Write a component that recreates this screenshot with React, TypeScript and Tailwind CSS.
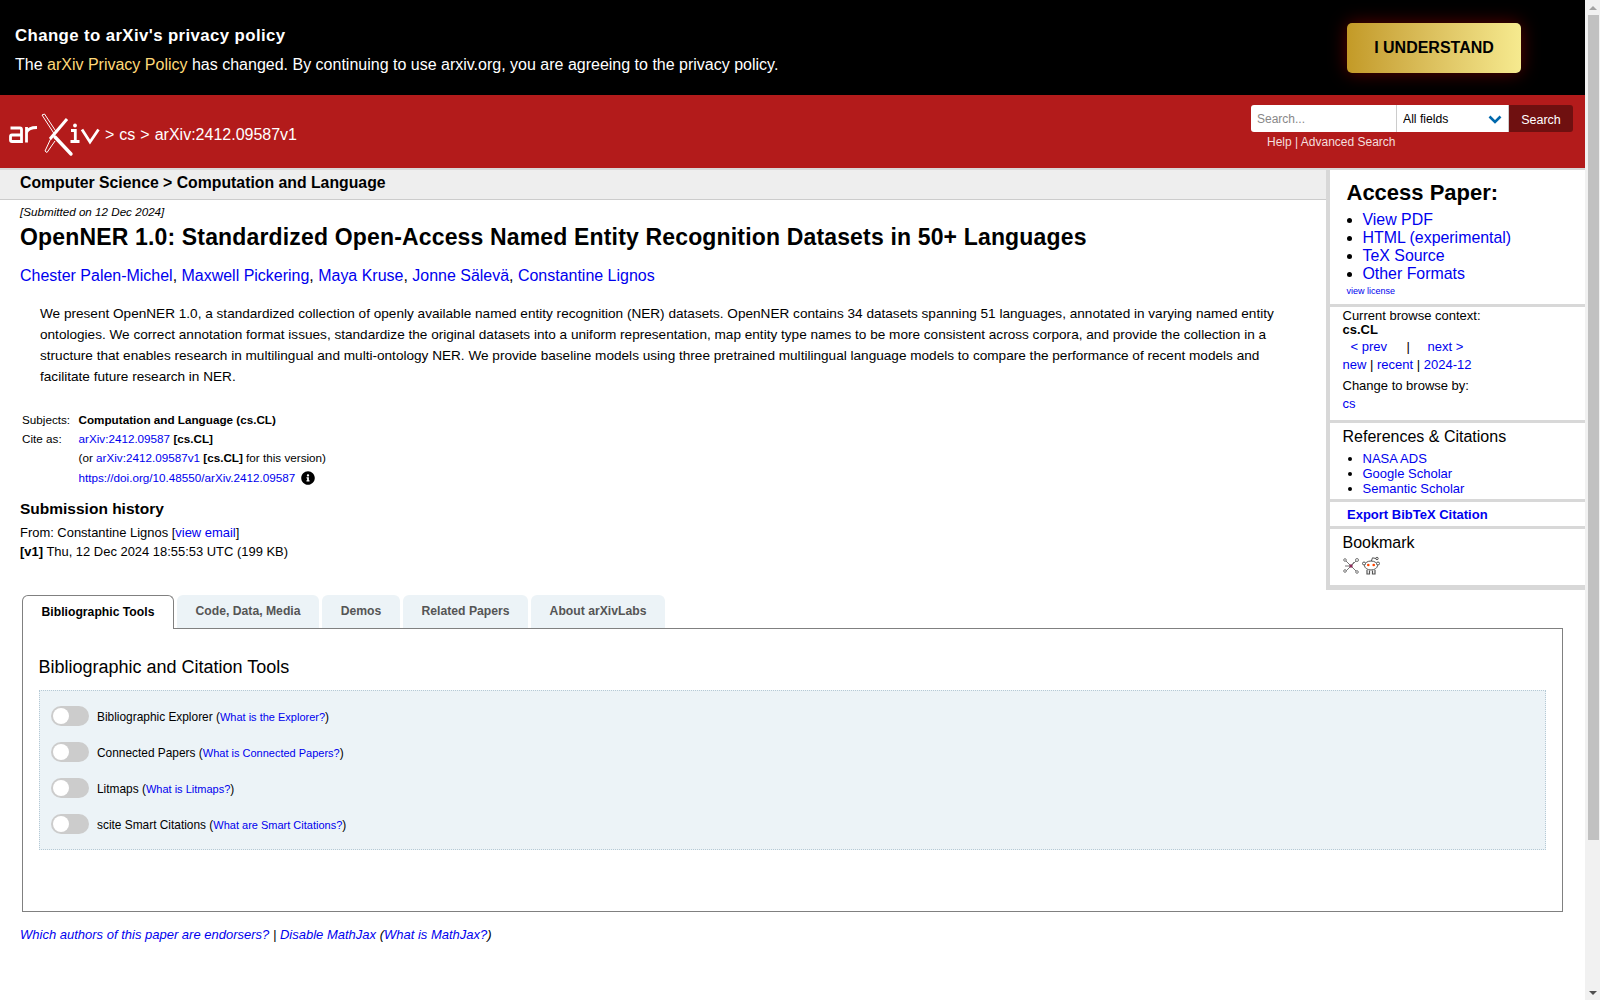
import React from "react";
import { FaInfoCircle } from "react-icons/fa";

const A = ({ children, className = "" }: { children: React.ReactNode; className?: string }) => (
  <a href="#" className={"text-[#0000ee] " + className}>{children}</a>
);

function Logo() {
  return (
    <svg width="110" height="50" viewBox="0 0 110 50" className="shrink-0" fill="none" stroke="#fff" strokeWidth="2.800">
      {/* a */}
      <path d="M10.500 18h9.500a1.500 1.500 0 0 1 1.500 1.500V31.500H12a1.500 1.500 0 0 1-1.500-1.500v-3.500A1.500 1.500 0 0 1 12 25h9.500" />
      {/* r */}
      <path d="M26.500 32.500V17M26.500 22.500c1-3 4-5 10.500-5" />
      {/* X */}
      <path d="M42 5 L55 25" strokeWidth="1" />
      <path d="M44.500 4 L57 23" strokeWidth="1" />
      <path d="M42 5 L44.500 4" strokeWidth="1" />
      <path d="M55 27 L71 44" strokeWidth="3.400" strokeLinecap="round" />
      <path d="M50 29 L67 9" strokeWidth="3" />
      <path d="M52 26 L45 41 L47 42.500 L55 31" strokeWidth="1" />
      {/* i */}
      <circle cx="75" cy="15.500" r="1.900" fill="#fff" stroke="none" />
      <path d="M71 20.500h4.300v11M70.500 31.500h9" />
      {/* v */}
      <path d="M82 19.500 L90 32 L98.500 19.500" strokeWidth="2.800" />
    </svg>
  );
}

function ScienceWise() {
  return (
    <svg width="18" height="18" viewBox="0 0 18 18" fill="none" stroke="#777" strokeWidth="1">
      <path d="M3 3L15 15M15 3L3 15M9 9L3 9M9 9L12 5" />
      <circle cx="3" cy="3" r="1.300" fill="#fff" />
      <circle cx="15" cy="3" r="1.500" fill="#fff" />
      <circle cx="3" cy="14" r="1.300" fill="#fff" />
      <circle cx="15" cy="15" r="1.300" fill="#fff" />
      <circle cx="9" cy="9" r="1.700" fill="#8c2f5b" stroke="none" />
    </svg>
  );
}

function Reddit() {
  return (
    <svg width="18" height="20" viewBox="0 0 18 20" fill="none" stroke="#555" strokeWidth="1">
      <path d="M9 6L10.500 1.800L14 2.500" />
      <circle cx="15" cy="2.500" r="1.200" />
      <ellipse cx="9" cy="9.500" rx="6.500" ry="4.500" fill="#fff" />
      <circle cx="2" cy="7.500" r="1.500" fill="#fff" />
      <circle cx="16" cy="7.500" r="1.500" fill="#fff" />
      <circle cx="6.300" cy="9" r="1.300" fill="#ff4500" stroke="none" />
      <circle cx="11.700" cy="9" r="1.300" fill="#ff4500" stroke="none" />
      <path d="M5 14v4h2.500v-3.500M13 14v4h-2.500v-3.500" strokeWidth="1.200" />
    </svg>
  );
}

function Toggle({ label, link, tail = ")" }: { label: string; link: string; tail?: string }) {
  return (
    <div className="flex items-center h-[36px]">
      <div className="w-[38px] h-[20px] rounded-full bg-[#cccccc] flex items-center pl-[2px] shrink-0">
        <div className="w-[16px] h-[16px] rounded-full bg-white" />
      </div>
      <div className="ml-[8px] pt-[2px] text-[11.900px] leading-[18px] text-black">
        {label} (<A className="text-[11px]">{link}</A>{tail}
      </div>
    </div>
  );
}

function Tab({ children, active = false, w }: { children: React.ReactNode; active?: boolean; w: string }) {
  return active ? (
    <div className={w + " h-[34px] -mb-[1px] relative z-10 bg-white border border-b-0 border-[#808080] rounded-t-[6px] flex items-center justify-center font-bold text-[12.200px] text-black pb-[1px]"}>
      {children}
    </div>
  ) : (
    <div className={w + " h-[33px] bg-[#ecf3f7] rounded-t-[6px] flex items-center justify-center font-bold text-[12.200px] text-[#555555] pb-[1px]"}>
      {children}
    </div>
  );
}

export default function App() {
  return (
    <div className="flex h-screen overflow-hidden bg-white text-black font-['Liberation_Sans',Arial,sans-serif]">
      <div className="w-[1585px] shrink-0 flex flex-col">
        {/* Privacy banner */}
        <div className="h-[95px] bg-black text-white flex items-center justify-between pl-[15px] pr-[64px] shrink-0">
          <div className="pt-[5px]">
            <div className="font-bold text-[16.800px] tracking-[0.4px] leading-[22px] mb-[7px]">Change to arXiv's privacy policy</div>
            <div className="text-[16px] leading-[22px]">
              The <a href="#" className="text-[#ffd978]">arXiv Privacy Policy</a> has changed. By continuing to use arxiv.org, you are agreeing to the privacy policy.
            </div>
          </div>
          <button className="w-[174px] h-[50px] mt-[1px] rounded-[5px] bg-gradient-to-r from-[#c39a26] to-[#f6ea8f] text-black font-bold text-[16px] shadow-[0_0_18px_rgba(170,0,0,0.55)]">
            I UNDERSTAND
          </button>
        </div>

        {/* Header */}
        <div className="h-[73px] bg-[#b31b1b] flex justify-between shrink-0">
          <div className="flex items-center pt-[7px] text-white text-[16px]">
            <Logo />
            <span className="-ml-[5px] mr-[5px]">&gt;</span>
            <span className="mr-[5px]">cs</span>
            <span className="mr-[5px]">&gt;</span>
            <span>arXiv:2412.09587v1</span>
          </div>
          <div className="pt-[10px] pr-[12px] w-[334px]">
            <div className="flex h-[27px]">
              <input placeholder="Search..." className="w-[145px] h-full bg-white rounded-l-[3px] pl-[6px] text-[12px] placeholder:text-[#888888] outline-none" />
              <div className="relative w-[113px] h-full">
                <select className="appearance-none w-full h-full bg-white border-x border-[#cccccc] pl-[6px] pt-[1px] text-[12.200px] text-black outline-none">
                  <option>All fields</option>
                </select>
                <svg width="14" height="9" viewBox="0 0 14 9" className="absolute right-[7px] top-[10px]" fill="none" stroke="#0068ac" strokeWidth="2.600">
                  <path d="M1.500 1.500L7 7L12.500 1.500" />
                </svg>
              </div>
              <button className="w-[64px] h-full bg-[#6f1010] text-white text-[12.500px] rounded-r-[3px] pt-[3px]">Search</button>
            </div>
            <div className="pl-[16px] mt-[2px] text-[12px] leading-[16px] text-[#f3dede]">Help | Advanced Search</div>
          </div>
        </div>

        {/* Paper + sidebar */}
        <div className="flex h-[422px] shrink-0">
          <div className="w-[1326px] shrink-0 border-t-2 border-[#d8d8d8]">
            <div className="h-[30px] bg-[#eeeeee] border-b border-[#cccccc] pl-[20px] font-bold text-[15.800px] leading-[26px]">
              Computer Science &gt; Computation and Language
            </div>
            <div className="pl-[20px]">
              <div className="italic text-[11.650px] leading-[14px] pt-[5px]">[Submitted on 12 Dec 2024]</div>
              <h1 className="font-bold text-[23px] leading-[30px] mt-[3px] tracking-[0.16px]">
                OpenNER 1.0: Standardized Open-Access Named Entity Recognition Datasets in 50+ Languages
              </h1>
              <div className="text-[15.980px] leading-[20px] mt-[14px]">
                <A>Chester Palen-Michel</A>, <A>Maxwell Pickering</A>, <A>Maya Kruse</A>, <A>Jonne Sälevä</A>, <A>Constantine Lignos</A>
              </div>
              <p className="w-[1240px] ml-[20px] mt-[17px] text-[13.600px] leading-[21px]">
                We present OpenNER 1.0, a standardized collection of openly available named entity recognition (NER) datasets. OpenNER contains 34 datasets spanning 51 languages, annotated in varying named entity ontologies. We correct annotation format issues, standardize the original datasets into a uniform representation, map entity type names to be more consistent across corpora, and provide the collection in a structure that enables research in multilingual and multi-ontology NER. We provide baseline models using three pretrained multilingual language models to compare the performance of recent models and facilitate future research in NER.
              </p>
              <div className="mt-[23px] ml-[2px] grid grid-cols-[56.500px_1fr] text-[11.700px] leading-[19.200px]">
                <div>Subjects:</div>
                <div className="font-bold">Computation and Language (cs.CL)</div>
                <div>Cite as:</div>
                <div><A>arXiv:2412.09587</A> <b>[cs.CL]</b></div>
                <div />
                <div>(or <A>arXiv:2412.09587v1</A> <b>[cs.CL]</b> for this version)</div>
                <div />
                <div className="flex items-center"><A>https://doi.org/10.48550/arXiv.2412.09587</A><FaInfoCircle className="ml-[6px] mt-[1px] text-[14px] text-black" /></div>
              </div>
              <div className="font-bold text-[15.500px] leading-[20px] mt-[12px]">Submission history</div>
              <div className="text-[12.950px] leading-[19px] mt-[4px]">
                From: Constantine Lignos [<A>view email</A>]
                <br />
                <b>[v1]</b> Thu, 12 Dec 2024 18:55:53 UTC (199 KB)
              </div>
            </div>
          </div>

          {/* Sidebar */}
          <aside className="flex-1 bg-[#d8d8d8] pl-[4px] pt-[2px] pb-[5px] flex flex-col">
            <div className="h-[134px] bg-white pl-[16.500px] pt-[10px]">
              <div className="font-bold text-[22px] leading-[26px]">Access Paper:</div>
              <ul className="list-disc pl-[16px] mt-[5px] text-[15.900px] leading-[18px]">
                <li><A>View PDF</A></li>
                <li><A>HTML (experimental)</A></li>
                <li><A>TeX Source</A></li>
                <li><A>Other Formats</A></li>
              </ul>
              <div className="text-[9px] leading-[12px] mt-[2px]"><A>view license</A></div>
            </div>
            <div className="h-[113px] bg-white mt-[3px] pl-[12.500px] pt-[1px] text-[13px] leading-[17.500px]">
              <div className="mt-[-1px]">Current browse context:</div>
              <div className="font-bold -mt-[4px]">cs.CL</div>
              <div className="flex ml-[8px]">
                <A className="w-[56px]">&lt; prev</A>
                <span className="w-[21px]">|</span>
                <A>next &gt;</A>
              </div>
              <div><A>new</A> | <A>recent</A> | <A>2024-12</A></div>
              <div className="mt-[4px]">Change to browse by:</div>
              <div><A>cs</A></div>
            </div>
            <div className="h-[76px] bg-white mt-[3px] pl-[12.500px] pt-[4px]">
              <div className="text-[16px] leading-[20px]">References &amp; Citations</div>
              <ul className="list-disc pl-[20px] mt-[4px] text-[13px] leading-[15px]">
                <li><A>NASA ADS</A></li>
                <li><A>Google Scholar</A></li>
                <li><A>Semantic Scholar</A></li>
              </ul>
            </div>
            <div className="h-[24px] bg-white mt-[3px] pl-[17px] text-[13px] font-bold leading-[25px]">
              <A>Export BibTeX Citation</A>
            </div>
            <div className="flex-1 bg-white mt-[3px] pl-[12.500px] pt-[4px]">
              <div className="text-[16px] leading-[20px]">Bookmark</div>
              <div className="flex items-center gap-[2px] mt-[3px] -ml-[1px]">
                <ScienceWise />
                <Reddit />
              </div>
            </div>
          </aside>
        </div>

        {/* Tabs */}
        <div className="flex gap-[3px] ml-[22px] mt-[5px] items-end">
          <Tab active w="w-[152px]">Bibliographic Tools</Tab>
          <Tab w="w-[142px]">Code, Data, Media</Tab>
          <Tab w="w-[78px]">Demos</Tab>
          <Tab w="w-[125px]">Related Papers</Tab>
          <Tab w="w-[134px]">About arXivLabs</Tab>
        </div>
        <div className="ml-[22px] w-[1541px] h-[284px] border border-[#808080] px-[16px] pt-[26px] shrink-0">
          <h2 className="text-[18px] leading-[24px] -ml-[0.500px]">Bibliographic and Citation Tools</h2>
          <div className="mt-[11px] h-[160px] bg-[#ecf3f7] border border-dotted border-[#b5c9d5] pl-[11px] pt-[7px]">
            <Toggle label="Bibliographic Explorer" link="What is the Explorer?" />
            <Toggle label="Connected Papers" link="What is Connected Papers?" />
            <Toggle label="Litmaps" link="What is Litmaps?" />
            <Toggle label="scite Smart Citations" link="What are Smart Citations?" />
          </div>
        </div>
        <div className="pl-[20px] mt-[14px] text-[13px] leading-[18px] italic">
          <A>Which authors of this paper are endorsers?</A> | <A>Disable MathJax</A> (<A>What is MathJax?</A>)
        </div>
      </div>

      {/* Page scrollbar */}
      <div className="w-[15px] shrink-0 h-full bg-[#f1f1f1] flex flex-col items-center">
        <div className="h-[15px] flex items-center justify-center shrink-0">
          <div className="w-0 h-0 border-x-[4px] border-x-transparent border-b-[4px] border-b-[#a3a3a3]" />
        </div>
        <div className="w-[11px] ml-[1px] h-[825px] bg-[#c1c1c1] shrink-0" />
        <div className="flex-1" />
        <div className="h-[15px] flex items-center justify-center shrink-0">
          <div className="w-0 h-0 border-x-[4px] border-x-transparent border-t-[4px] border-t-[#505050]" />
        </div>
      </div>
    </div>
  );
}
